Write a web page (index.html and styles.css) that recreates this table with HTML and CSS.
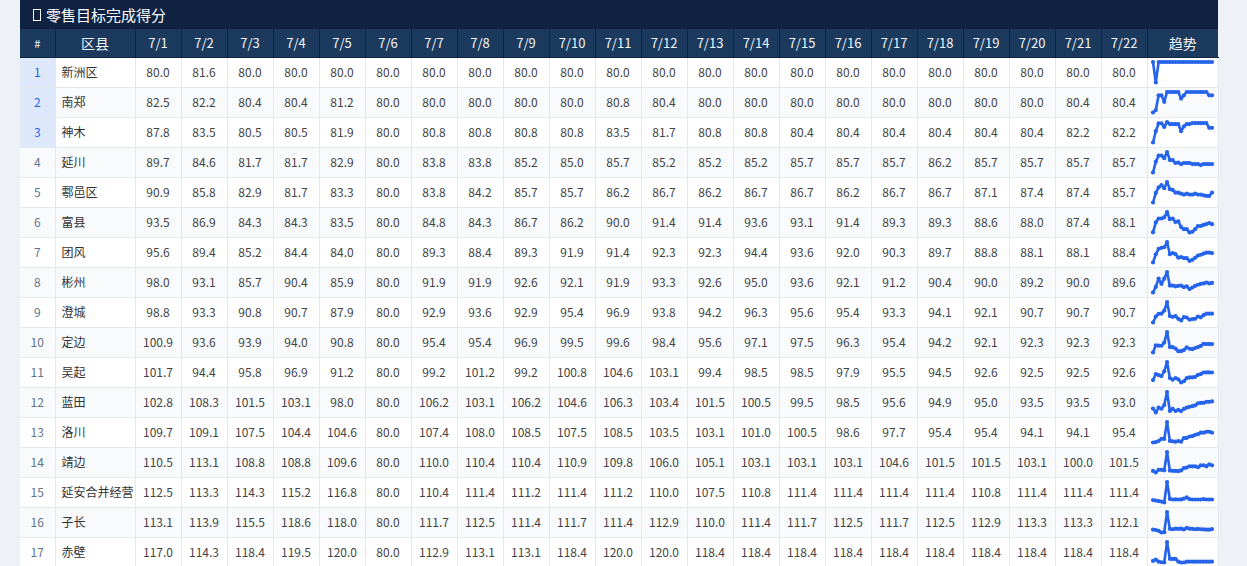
FILE: index.html
```html
<!DOCTYPE html>
<html lang="zh-CN">
<head>
<meta charset="utf-8">
<title>零售目标完成得分</title>
<link rel="stylesheet" href="styles.css">
</head>
<body>
<div class="page">
  <div class="panel">
    <div class="title"><span class="tofu"></span>零售目标完成得分</div>
    <table class="grid">
      <colgroup>
        <col class="c-idx"><col class="c-name">
        <col class="c-d"><col class="c-d"><col class="c-d"><col class="c-d"><col class="c-d"><col class="c-d"><col class="c-d"><col class="c-d"><col class="c-d"><col class="c-d"><col class="c-d"><col class="c-d"><col class="c-d"><col class="c-d"><col class="c-d"><col class="c-d"><col class="c-d"><col class="c-d"><col class="c-d"><col class="c-d"><col class="c-d"><col class="c-d">
        <col class="c-trend">
      </colgroup>
      <thead>
        <tr>
          <th class="h-idx">#</th><th class="h-name">区县</th>
          <th>7/1</th><th>7/2</th><th>7/3</th><th>7/4</th><th>7/5</th><th>7/6</th><th>7/7</th><th>7/8</th><th>7/9</th><th>7/10</th><th>7/11</th><th>7/12</th><th>7/13</th><th>7/14</th><th>7/15</th><th>7/16</th><th>7/17</th><th>7/18</th><th>7/19</th><th>7/20</th><th>7/21</th><th>7/22</th>
          <th class="h-name">趋势</th>
        </tr>
      </thead>
      <tbody id="rows"></tbody>
    </table>
  </div>
</div>
<script src="app.js"></script>
</body>
</html>
```
FILE: styles.css
```css
html, body {
  margin: 0;
  padding: 0;
  background: #eef2f7;
  overflow: hidden;
}
body {
  font-family: "Noto Sans CJK SC", "Noto Sans", sans-serif;
  color: #333;
}
.page {
  padding-left: 20px;
}
.panel {
  width: 1198px;
  background: #fff;
}
.title {
  height: 29px;
  background: #0f2242;
  color: #fff;
  font-size: 15px;
  line-height: 29px;
  padding-left: 13px;
  display: flex;
  align-items: center;
}
.tofu {
  display: inline-block;
  width: 6px;
  height: 10px;
  border: 1px solid #fff;
  margin-right: 5px;
}
.grid {
  width: 1198px;
  border-collapse: collapse;
  table-layout: fixed;
}
.c-idx { width: 35px; }
.c-name { width: 80px; }
.c-d { width: 46px; }
.c-trend { width: 71px; }
.grid thead tr { height: 28px; }
.grid th {
  padding: 0;
  background: #1b3a5d;
  color: #f1f5f9;
  font-weight: normal;
  font-size: 13px;
  line-height: 16px;
  border-left: 1px solid #0f2242;
  border-bottom: 1px solid #0f2242;
  text-align: center;
}
.grid th:first-child { border-left: none; }
.grid th.h-idx { font-size: 11px; }
.grid th.h-name { font-size: 14px; }
.grid tbody tr { height: 30px; }
.grid td {
  padding: 0;
  border: 1px solid #e3e8ef;
  border-top: none;
  font-size: 12px;
  line-height: 16px;
  color: #444;
  text-align: center;
  white-space: nowrap;
  overflow: hidden;
}
.grid tbody tr:nth-child(even) td { background: #f8fafc; }
.grid td.idx { color: #64748b; border-left: none; }
.grid tbody tr.top td.idx { background: #dde9fb; color: #2563eb; }
.grid td.name { text-align: left; padding-left: 6px; color: #333; }
.grid td.trend { padding: 0; vertical-align: top; }
.spark { display: block; width: 70px; height: 29px; }
.spark polyline { fill: none; stroke: #2563eb; stroke-width: 2.6; stroke-linejoin: round; stroke-linecap: round; }
.spark circle { fill: #2563eb; }
```
FILE: app.js
```js
var data = [
  ["新洲区", "80.0 81.6 80.0 80.0 80.0 80.0 80.0 80.0 80.0 80.0 80.0 80.0 80.0 80.0 80.0 80.0 80.0 80.0 80.0 80.0 80.0 80.0"],
  ["南郑", "82.5 82.2 80.4 80.4 81.2 80.0 80.0 80.0 80.0 80.0 80.8 80.4 80.0 80.0 80.0 80.0 80.0 80.0 80.0 80.0 80.4 80.4"],
  ["神木", "87.8 83.5 80.5 80.5 81.9 80.0 80.8 80.8 80.8 80.8 83.5 81.7 80.8 80.8 80.4 80.4 80.4 80.4 80.4 80.4 82.2 82.2"],
  ["延川", "89.7 84.6 81.7 81.7 82.9 80.0 83.8 83.8 85.2 85.0 85.7 85.2 85.2 85.2 85.7 85.7 85.7 86.2 85.7 85.7 85.7 85.7"],
  ["鄠邑区", "90.9 85.8 82.9 81.7 83.3 80.0 83.8 84.2 85.7 85.7 86.2 86.7 86.2 86.7 86.7 86.2 86.7 86.7 87.1 87.4 87.4 85.7"],
  ["富县", "93.5 86.9 84.3 84.3 83.5 80.0 84.8 84.3 86.7 86.2 90.0 91.4 91.4 93.6 93.1 91.4 89.3 89.3 88.6 88.0 87.4 88.1"],
  ["团风", "95.6 89.4 85.2 84.4 84.0 80.0 89.3 88.4 89.3 91.9 91.4 92.3 92.3 94.4 93.6 92.0 90.3 89.7 88.8 88.1 88.1 88.4"],
  ["彬州", "98.0 93.1 85.7 90.4 85.9 80.0 91.9 91.9 92.6 92.1 91.9 93.3 92.6 95.0 93.6 92.1 91.2 90.4 90.0 89.2 90.0 89.6"],
  ["澄城", "98.8 93.3 90.8 90.7 87.9 80.0 92.9 93.6 92.9 95.4 96.9 93.8 94.2 96.3 95.6 95.4 93.3 94.1 92.1 90.7 90.7 90.7"],
  ["定边", "100.9 93.6 93.9 94.0 90.8 80.0 95.4 95.4 96.9 99.5 99.6 98.4 95.6 97.1 97.5 96.3 95.4 94.2 92.1 92.3 92.3 92.3"],
  ["吴起", "101.7 94.4 95.8 96.9 91.2 80.0 99.2 101.2 99.2 100.8 104.6 103.1 99.4 98.5 98.5 97.9 95.5 94.5 92.6 92.5 92.5 92.6"],
  ["蓝田", "102.8 108.3 101.5 103.1 98.0 80.0 106.2 103.1 106.2 104.6 106.3 103.4 101.5 100.5 99.5 98.5 95.6 94.9 95.0 93.5 93.5 93.0"],
  ["洛川", "109.7 109.1 107.5 104.4 104.6 80.0 107.4 108.0 108.5 107.5 108.5 103.5 103.1 101.0 100.5 98.6 97.7 95.4 95.4 94.1 94.1 95.4"],
  ["靖边", "110.5 113.1 108.8 108.8 109.6 80.0 110.0 110.4 110.4 110.9 109.8 106.0 105.1 103.1 103.1 103.1 104.6 101.5 101.5 103.1 100.0 101.5"],
  ["延安合并经营", "112.5 113.3 114.3 115.2 116.8 80.0 110.4 111.4 111.2 111.4 111.2 110.0 107.5 110.8 111.4 111.4 111.4 111.4 110.8 111.4 111.4 111.4"],
  ["子长", "113.1 113.9 115.5 118.6 118.0 80.0 111.7 112.5 111.4 111.7 111.4 112.9 110.0 111.4 111.7 112.5 111.7 112.5 112.9 113.3 113.3 112.1"],
  ["赤壁", "117.0 114.3 118.4 119.5 120.0 80.0 112.9 113.1 113.1 118.4 120.0 120.0 118.4 118.4 118.4 118.4 118.4 118.4 118.4 118.4 118.4 118.4"]
];
var NS = "http://www.w3.org/2000/svg";
var tbody = document.getElementById("rows");
data.forEach(function (row, r) {
  var tr = document.createElement("tr");
  if (r < 3) tr.className = "top";
  var td = document.createElement("td");
  td.className = "idx";
  td.textContent = String(r + 1);
  tr.appendChild(td);
  td = document.createElement("td");
  td.className = "name";
  td.textContent = row[0];
  tr.appendChild(td);
  var vals = row[1].split(" ");
  vals.forEach(function (v) {
    var c = document.createElement("td");
    c.textContent = v;
    tr.appendChild(c);
  });
  var nums = vals.map(parseFloat);
  var min = Math.min.apply(null, nums), max = Math.max.apply(null, nums);
  var svg = document.createElementNS(NS, "svg");
  svg.setAttribute("class", "spark");
  svg.setAttribute("viewBox", "0 0 70 29");
  var pts = nums.map(function (n, i) {
    var x = 5 + i * 59 / 21;
    var y = max === min ? 14 : 4 + (n - min) / (max - min) * 20.5;
    return [x, y];
  });
  var pl = document.createElementNS(NS, "polyline");
  pl.setAttribute("points", pts.map(function (p) { return p[0].toFixed(2) + "," + p[1].toFixed(2); }).join(" "));
  svg.appendChild(pl);
  pts.forEach(function (p) {
    var ci = document.createElementNS(NS, "circle");
    ci.setAttribute("cx", p[0].toFixed(2));
    ci.setAttribute("cy", p[1].toFixed(2));
    ci.setAttribute("r", "2.1");
    svg.appendChild(ci);
  });
  var tt = document.createElement("td");
  tt.className = "trend";
  tt.appendChild(svg);
  tr.appendChild(tt);
  tbody.appendChild(tr);
});
```
